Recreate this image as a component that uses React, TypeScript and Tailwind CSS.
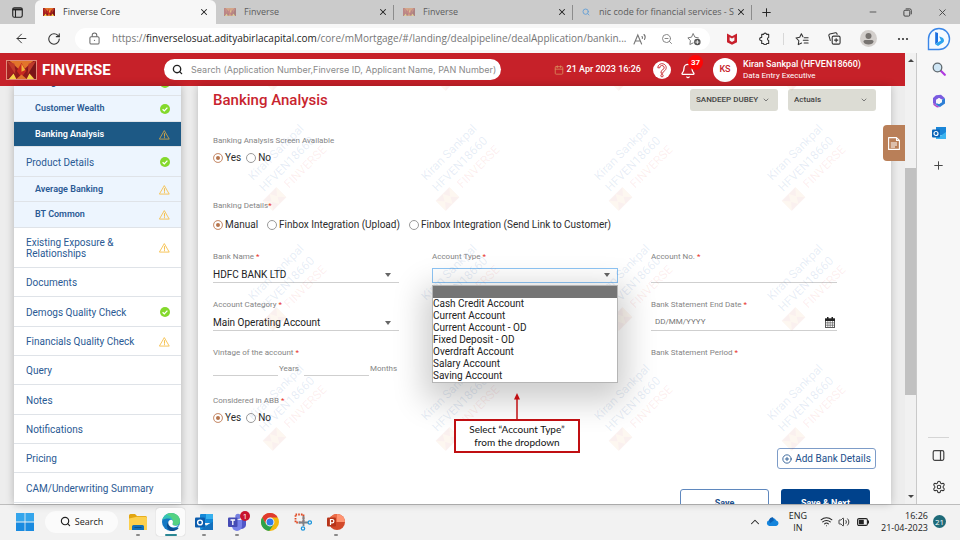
import React from "react";
import {
  ArrowLeft,
  Bell,
  Calendar,
  ChevronDown,
  ChevronUp,
  CirclePlus,
  Minus,
  Plus,
  RotateCw,
  Search,
  Settings,
  Volume2,
  Wifi,
  X,
  ZoomOut,
} from "lucide-react";

const UI = "font-['Open_Sans','Noto_Sans',sans-serif]";

function BrandMark({ className }: { className: string }) {
  return (
    <svg viewBox="0 0 31 20" preserveAspectRatio="none" className={className} aria-hidden="true">
      <rect width="31" height="20" fill="#8f1a1c" />
      <path d="M3 0h25L15.500 12z" fill="#e2742a" />
      <path d="M0 0l10 10L0 20z" fill="#a82020" />
      <path d="M31 0L21 10l10 10z" fill="#7a1518" />
      <path d="M0 0l8 3 1 12zM31 0l-8 3-1 12z" fill="#c03a2a" />
      <path d="M15.500 2l5 9-5 7-5-7z" fill="#c8281f" />
      <path d="M15.500 3l4 7-4 2z" fill="#f0b63a" />
      <path d="M2 20l5-6 3 6zM29 20l-5-6-3 6z" fill="#f6d24a" />
      <path d="M10 20l5.500-5 5.500 5z" fill="#e0762c" />
    </svg>
  );
}

function WarnIcon({ color }: { color: string }) {
  return (
    <svg viewBox="0 0 12 11" className="h-[10px] w-[11px]" fill="none" stroke={color} strokeLinecap="round" strokeLinejoin="round" aria-label="Pending">
      <path d="M6 1L11.200 10H.8z" strokeWidth="1" />
      <path d="M6 3.800v3M6 8.300v.3" strokeWidth="1.200" />
    </svg>
  );
}

function DoneIcon() {
  return (
    <svg viewBox="0 0 10 10" className="size-[10px]" aria-label="Complete">
      <circle cx="5" cy="5" r="5" fill="#84d92c" />
      <path d="M2.600 5.200l1.700 1.700 3.100-3.300" fill="none" stroke="#fff" strokeWidth="1.300" />
    </svg>
  );
}

/* ---------- browser chrome ---------- */

function TabButton({ title, icon, active, divider }: { title: string; icon: React.ReactNode; active?: boolean; divider?: boolean }) {
  return (
    <div
      className={
        active
          ? "flex h-full w-[181px] items-center rounded-t-md bg-[#f7f7f7] pr-[7px] pl-2 text-[#3c3c3c]"
          : "flex h-full w-[179px] items-center pr-[5px] pl-2 text-[#5c5c5c]"
      }
    >
      {icon}
      <span className="ml-2 min-w-0 flex-1 whitespace-nowrap">{title}</span>
      <button aria-label="Close tab" className="ml-1 shrink-0 text-[#222]">
        <X className="size-[10px]" strokeWidth={2.500} />
      </button>
      {divider && <span className="-mr-1 ml-[5px] h-[15px] w-px shrink-0 bg-[#8c8c8c]" />}
    </div>
  );
}

function TabStrip() {
  return (
    <div className="flex h-6 shrink-0 items-center bg-[#cbcbcb] text-[9px]">
      <button aria-label="Tab actions" className="flex w-[35px] justify-center">
        <svg viewBox="0 0 12 12" className="size-[11px]" fill="none" stroke="#222">
          <rect x=".8" y=".8" width="10.400" height="10.400" rx="1.800" strokeWidth="1.200" />
          <path d="M.8 2.600h10.400" strokeWidth="2.200" />
          <path d="M3.800 3v8" strokeWidth="1.200" />
        </svg>
      </button>
      <TabButton active title="Finverse Core" icon={<BrandMark className="h-2 w-3" />} />
      <TabButton divider title="Finverse" icon={<BrandMark className="h-2 w-3 opacity-40" />} />
      <TabButton divider title="Finverse" icon={<BrandMark className="h-2 w-3 opacity-40" />} />
      <TabButton divider title="nic code for financial services - S" icon={<Search className="mr-px size-2 shrink-0 text-[#6ba3d6]" strokeWidth={3} />} />
      <button aria-label="New tab" className="ml-[7px] text-[#222]">
        <Plus className="size-[13px]" strokeWidth={1.800} />
      </button>
      <div className="ml-auto flex items-center gap-[25px] pr-3 text-[#444]">
        <button aria-label="Minimise"><Minus className="size-[10px]" strokeWidth={2} /></button>
        <button aria-label="Restore">
          <svg viewBox="0 0 10 10" className="size-[9px]" fill="none" stroke="currentColor" strokeWidth="1.100">
            <rect x="1" y="2.500" width="6.500" height="6.500" rx="1.200" />
            <path d="M3 1h4.500A1.700 1.700 0 0 1 9.200 2.700V7" />
          </svg>
        </button>
        <button aria-label="Close"><X className="size-[11px]" strokeWidth={2} /></button>
      </div>
    </div>
  );
}

function StarIcon({ kind }: { kind: "add" | "list" }) {
  return (
    <svg viewBox="0 0 16 16" className="size-[14px]" fill="none" stroke={kind === "add" ? "#777" : "#333"} strokeLinejoin="round" strokeLinecap="round">
      {kind === "add" ? (
        <>
          <path d="M7 12.500L3.300 14.300l.6-4.400L1 6.700l4.200-.8L7 1.700l2 4.200 4 .8" strokeWidth="1.100" />
          <circle cx="11.800" cy="11.500" r="3.700" fill="#555" stroke="none" />
          <path d="M11.800 9.700v3.600M10 11.500h3.600" stroke="#fff" strokeWidth="1" />
        </>
      ) : (
        <path d="M7.500 12.500L3.700 14.400l.7-4.400L1.200 6.800l4.200-.7L7.300 2l1.700 3.500M10.500 6.500H15M9.500 9.500H15M10.500 12.500H15" strokeWidth="1.200" />
      )}
    </svg>
  );
}

function Toolbar() {
  return (
    <div className="flex h-[29px] shrink-0 items-center bg-[#f7f7f7] text-[#333]">
      <button aria-label="Back" className="ml-[14px]"><ArrowLeft className="size-[15px]" strokeWidth={1.600} /></button>
      <button aria-label="Reload" className="ml-[18px]"><RotateCw className="size-[14px]" strokeWidth={1.900} /></button>
      <div className="ml-[14px] flex h-[22px] min-w-0 flex-1 items-center rounded-full bg-white pr-[9px] pl-[14px]">
        <svg viewBox="0 0 12 14" className="h-[13px] w-[11px] shrink-0" fill="none" stroke="#666" strokeWidth="1.100" aria-label="Secure">
          <rect x="1" y="5" width="10" height="8" rx="1.500" />
          <path d="M3.500 5V3.500a2.500 2.500 0 0 1 5 0V5" />
          <circle cx="6" cy="9" r=".7" fill="#666" stroke="none" />
        </svg>
        <p className="ml-[12px] min-w-0 flex-1 truncate text-[10px] text-[#767676]">
          https://<span className="text-[#1d1d1d]">finverselosuat.adityabirlacapital.com</span>/core/mMortgage/#/landing/dealpipeline/dealApplication/bankin...
        </p>
        <button aria-label="Read aloud" className="ml-[2px]">
          <svg viewBox="0 0 14 12" className="h-3 w-[14px]" fill="none" stroke="#777" strokeWidth="1.100" strokeLinecap="round">
            <path d="M1 11L4.800 2 8.600 11M2.400 8h4.800M9 3.500c.6.600.6 1.400.3 2M11 1.500c1.400 1.400 1.400 3.400.5 5" />
          </svg>
        </button>
        <button aria-label="Zoom out" className="ml-[14px]"><ZoomOut className="size-[12px] text-[#888]" strokeWidth={2} /></button>
        <button aria-label="Add to favourites" className="ml-[14px]"><StarIcon kind="add" /></button>
      </div>
      <div className="ml-4 flex items-center">
        <svg viewBox="0 0 12 12" className="size-[12px]" aria-label="McAfee">
          <path d="M1 .5l5 2.800L11 .5v8.700l-5 2.500-5-2.500z" fill="#c8202c" />
          <path d="M3.600 4.200L6 5.600l2.400-1.400v3.400L6 8.900 3.600 7.600z" fill="#f7f7f7" />
        </svg>
        <button aria-label="Extensions" className="ml-[20px]">
          <svg viewBox="0 0 14 14" className="size-[13px]" fill="none" stroke="#333" strokeWidth="1.200" strokeLinejoin="round">
            <path d="M4 2.500h2a1.700 1.700 0 0 1 3.300 0h2.200v3.300a1.700 1.700 0 0 0 0 3.300v3.300H9.300a1.700 1.700 0 0 1-3.300 0H4V9.300a1.800 1.800 0 1 1 0-3.500z" />
          </svg>
        </button>
        <span className="ml-3 h-3 w-px bg-[#d8d8d8]" />
        <button aria-label="Favourites" className="ml-[11px]"><StarIcon kind="list" /></button>
        <button aria-label="Collections" className="ml-[19px]">
          <svg viewBox="0 0 14 14" className="size-[13px]" fill="none" stroke="#333" strokeWidth="1.200">
            <rect x="4.500" y="4.500" width="8.500" height="8.500" rx="1.500" />
            <path d="M8.800 6.600v4.400M6.600 8.800H11M2.600 9.500L1 4a1.500 1.500 0 0 1 1-1.800L8 .8a1.500 1.500 0 0 1 1.600 1L10 3" />
          </svg>
        </button>
        <button aria-label="Profile" className="ml-[19px]">
          <svg viewBox="0 0 17 17" className="size-[17px]">
            <circle cx="8.500" cy="8.500" r="8.500" fill="#d3cfcc" />
            <circle cx="8.500" cy="6" r="3" fill="#777370" />
            <path d="M3.500 11.500a1.500 1.500 0 0 1 1.500-1.500h7a1.500 1.500 0 0 1 1.500 1.500c0 4-10 4-10 0z" fill="#777370" />
          </svg>
        </button>
        <button aria-label="Settings and more" className="ml-[20px]">
          <svg viewBox="0 0 12 4" className="h-1 w-[12px]" fill="#333"><circle cx="2" cy="2" r="1.100" /><circle cx="6" cy="2" r="1.100" /><circle cx="10" cy="2" r="1.100" /></svg>
        </button>
      </div>
      <button aria-label="Bing" className="mr-[9px] ml-[18px]">
        <svg viewBox="0 0 24 24" className="size-[24px]">
          <path d="M1.500 22.500V12A10.500 10.500 0 1 1 12 22.500z" fill="#f4faff" stroke="#3a86e8" strokeWidth="1.400" />
          <path d="M8.200 5l2.800 1v9.200l-2.800 2z" fill="#1b6fe0" />
          <path d="M8.200 17.200l2.800-2 3-1.800-1.800-3.800c2.500.7 4.800 1.500 4.800 4 0 1-.5 1.700-1.200 2.200L11 19z" fill="#2ba3ee" />
        </svg>
      </button>
    </div>
  );
}

function EdgeSidebar() {
  return (
    <aside className="flex w-[43px] shrink-0 flex-col items-center bg-[#f7f7f7] pt-[9px] pb-[10px]">
      <div className="flex flex-col items-center gap-[18px]">
        <svg viewBox="0 0 14 14" className="size-[14px]">
          <path d="M8.800 8.800l4 4" stroke="#b03ae0" strokeWidth="2.200" strokeLinecap="round" />
          <circle cx="5.500" cy="5.500" r="4.300" fill="#cfe6f5" stroke="#60696f" strokeWidth="1.300" />
        </svg>
        <svg viewBox="0 0 14 14" className="size-[14px]">
          <path d="M4 1.200L9 .8l4 3.400-3 1.600L7 4 4 6v5L1 9V4z" fill="#7a5be0" />
          <path d="M13 4.200V9.500L8 13l-4-2 .5-2L7 10l3-2V5.800z" fill="#2d7fd6" />
          <path d="M1 9l3 2 4 2-3 .5L1.500 11z" fill="#b04ad0" />
          <path d="M7 4l3 1.800V8l-3 2-3-1.500V6z" fill="#f7f7f7" />
        </svg>
        <svg viewBox="0 0 14 14" className="size-[14px]">
          <rect x="4" y="1" width="10" height="8" fill="#1a86d8" />
          <path d="M4 6l5 3.500L14 6v7H4z" fill="#3cb4f0" />
          <rect x="0" y="3.500" width="8" height="8" rx="1" fill="#0a64b8" />
          <circle cx="4" cy="7.500" r="2" fill="none" stroke="#fff" strokeWidth="1.200" />
        </svg>
        <button aria-label="Add" className="mt-px"><Plus className="size-[13px] text-[#444]" strokeWidth={1.800} /></button>
      </div>
      <div className="mt-auto flex w-[21px] flex-col items-center gap-[18px] border-t border-[#d5d5d5] pt-[11px]">
        <svg viewBox="0 0 13 13" className="size-[13px]" fill="none" stroke="#444" strokeWidth="1.200">
          <rect x="1.200" y="1.700" width="10.600" height="9.600" rx="1.500" />
          <path d="M8.500 1.700v9.600" />
        </svg>
        <Settings className="size-[14px] text-[#333]" strokeWidth={1.800} />
      </div>
    </aside>
  );
}

/* ---------- application ---------- */

function AppHeader() {
  return (
    <header className="flex h-[33px] shrink-0 items-center bg-[#c62129] text-white">
      <BrandMark className="ml-[6px] h-5 w-[31px] border border-[#e08a7a]" />
      <strong className="ml-[5px] w-[70px] text-[15px] leading-5 font-bold">FINVERSE</strong>
      <label className="ml-[52px] flex h-[21px] w-[337px] items-center rounded-full bg-white pl-2">
        <Search className="size-[11px] shrink-0 text-[#222]" strokeWidth={3} />
        <input
          aria-label="Search"
          className="ml-2 w-full min-w-0 bg-transparent font-[Inter,sans-serif] text-[9px] text-[#333] outline-none placeholder:text-[#8a8a8a]"
          placeholder="Search (Application Number,Finverse ID, Applicant Name, PAN Number)"
        />
      </label>
      <div className="ml-auto flex items-center pr-11">
        <Calendar className="size-[10px] text-[#d98a5c]" strokeWidth={2} />
        <time className="ml-[3px] text-[9px] font-medium whitespace-nowrap">21 Apr 2023 16:26</time>
        <button aria-label="Help" className="ml-3">
          <svg viewBox="0 0 18 18" className="size-[18px]">
            <circle cx="9" cy="9" r="9" fill="#fff" />
            <path d="M4.800 6.800a4.200 4 0 1 1 6.500 3.200c-1.100.8-1.300 1.100-1.300 2.200H8c0-2 .5-2.700 1.700-3.600A2.200 2.100 0 1 0 6.800 6.800z" fill="none" stroke="#c62129" strokeWidth=".9" />
            <circle cx="9" cy="14.700" r="1.200" fill="none" stroke="#c62129" strokeWidth=".9" />
          </svg>
        </button>
        <button aria-label="Notifications" className="relative ml-[9px]">
          <Bell className="mt-[3px] size-[16px]" strokeWidth={2} />
          <span className="absolute -top-[5px] left-[8px] flex size-[15px] items-center justify-center rounded-full bg-[#fe0505] text-[8px] font-bold">37</span>
        </button>
        <span className="ml-[17px] flex size-6 items-center justify-center rounded-full bg-white text-[9px] font-medium text-[#c62129]">KS</span>
        <div className="ml-[6px] whitespace-nowrap">
          <p className="text-[9px] leading-[12px] font-medium">Kiran Sankpal (HFVEN18660)</p>
          <p className="text-[8px] leading-[11px]">Data Entry Executive</p>
        </div>
      </div>
    </header>
  );
}

type NavItem = { label: string; level: "main" | "sub"; height: string; status?: "done" | "warn"; active?: boolean; tint?: boolean };

const NAV: NavItem[] = [
  { label: "Obligation", level: "sub", height: "h-[26px]", status: "done", tint: true },
  { label: "Customer Wealth", level: "sub", height: "h-[26px]", status: "done", tint: true },
  { label: "Banking Analysis", level: "sub", height: "h-[25px]", status: "warn", active: true },
  { label: "Product Details", level: "main", height: "h-[30px]", status: "done", tint: true },
  { label: "Average Banking", level: "sub", height: "h-[25px]", status: "warn", tint: true },
  { label: "BT Common", level: "sub", height: "h-[26px]", status: "warn", tint: true },
  { label: "Existing Exposure & Relationships", level: "main", height: "h-10", status: "warn" },
  { label: "Documents", level: "main", height: "h-[29px]" },
  { label: "Demogs Quality Check", level: "main", height: "h-[30px]", status: "done" },
  { label: "Financials Quality Check", level: "main", height: "h-[29px]", status: "warn" },
  { label: "Query", level: "main", height: "h-[29px]" },
  { label: "Notes", level: "main", height: "h-[30px]" },
  { label: "Notifications", level: "main", height: "h-[29px]" },
  { label: "Pricing", level: "main", height: "h-[29px]" },
  { label: "CAM/Underwriting Summary", level: "main", height: "h-[30px]" },
];

function SideNav() {
  return (
    <nav className="ml-[14px] w-[167px] shrink-0 overflow-hidden bg-white shadow-[0_0_8px_rgba(0,0,0,0.25)]">
      <ul className="-mt-4">
        {NAV.map((item) => {
          const bg = item.active ? "bg-[#1d5985]" : item.tint ? "bg-[#edf5fe]" : "bg-white";
          return (
            <li key={item.label} className={`${item.height} ${bg} border-b border-[#dfe3e8]`}>
              <a
                href="#"
                className={`flex h-full items-center pt-px pr-[11px] ${
                  item.level === "sub" ? "pl-[21px] text-[9px] font-semibold" : "pl-3 text-[10px] leading-[11px]"
                } ${item.active ? "text-white" : "text-[#2a5a94]"}`}
              >
                <span className={item.label.startsWith("Existing") ? "w-[100px]" : "whitespace-nowrap"}>{item.label}</span>
                <span className="ml-auto">
                  {item.status === "done" && <DoneIcon />}
                  {item.status === "warn" && <WarnIcon color={item.active ? "#c9a24a" : "#f6c14e"} />}
                </span>
              </a>
            </li>
          );
        })}
      </ul>
    </nav>
  );
}

function Watermark() {
  const cols = [253, 426, 599, 772];
  const rows = [-25, 95, 215, 335];
  return (
    <svg className="pointer-events-none absolute inset-0 size-full text-[12px]" aria-hidden="true">
      {rows.map((y) =>
        cols.map((x) => (
          <g key={`${x}-${y}`} transform={`translate(${x - 198} ${y}) rotate(-45)`}>
            <text fill="#3a6cb5" fillOpacity=".12">Kiran Sankpal</text>
            <text y="16" fill="#3a6cb5" fillOpacity=".12">HFVEN18660</text>
            <g opacity=".07">
              <rect x="-7" y="21" width="19" height="14" fill="#c8382a" />
              <path d="M-7 21l6 7-6 7M12 21l-6 7 6 7M2.500 21l4 7-4 7-4-7z" fill="#f0a040" />
            </g>
            <text x="20" y="31" fill="#e0403a" fillOpacity=".09">FINVERSE</text>
          </g>
        ))
      )}
    </svg>
  );
}

function Req() {
  return <span className="text-[#e8302a]"> *</span>;
}

const LABEL = "block h-3 text-[8px] leading-3 whitespace-nowrap text-[#858585]";
const LINE = "border-b border-[#cfcfcf]";

function Radio({ name, label, checked }: { name: string; label: string; checked?: boolean }) {
  return (
    <label className="flex items-center gap-[2px] text-[10px] leading-4 whitespace-nowrap text-[#2c2c2c]">
      <input
        type="radio"
        name={name}
        defaultChecked={checked}
        className="size-[10px] shrink-0 appearance-none rounded-full border border-[#9a9a9a] bg-white checked:border-[#cf9a7c] checked:bg-[#b5744c] checked:shadow-[inset_0_0_0_2px_white]"
      />
      {label}
    </label>
  );
}

function Caret() {
  return <span className="pointer-events-none absolute top-[5px] right-[8px] border-x-[3px] border-t-4 border-x-transparent border-t-[#666]" />;
}

function SelectField({ id, label, value }: { id: string; label: string; value: string }) {
  return (
    <div>
      <label htmlFor={id} className={LABEL}>{label}<Req /></label>
      <div className="relative mt-[5px]">
        <select id={id} className={`block h-[15px] w-full appearance-none bg-transparent pr-5 pb-px text-[10px] leading-[13px] text-[#222] outline-none ${LINE}`}>
          <option>{value}</option>
        </select>
        <Caret />
      </div>
    </div>
  );
}

const ACCOUNT_TYPES = [
  "Cash Credit Account",
  "Current Account",
  "Current Account - OD",
  "Fixed Deposit - OD",
  "Overdraft Account",
  "Salary Account",
  "Saving Account",
];

function AccountType() {
  return (
    <div className="relative">
      <label htmlFor="acc-type" className={LABEL}>Account Type<Req /></label>
      <div className="relative mt-[5px]">
        <select id="acc-type" className="block h-[15px] w-full appearance-none border border-[#8ec5f5] bg-transparent text-[10px] outline-none">
          <option></option>
        </select>
        <Caret />
      </div>
      <ul role="listbox" aria-label="Account Type" className="absolute inset-x-0 top-[34px] z-10 border border-[#b5b5b5] bg-white shadow-[0_10px_30px_8px_rgba(0,0,0,0.2)]">
        <li role="option" aria-selected="true" className="h-3 bg-[#757575]" />
        {ACCOUNT_TYPES.map((t) => (
          <li key={t} role="option" aria-selected="false" className="h-3 text-[10px] leading-3 whitespace-nowrap text-[#222]">{t}</li>
        ))}
      </ul>
      <div className="absolute top-[142px] left-[22px] z-20 flex w-[126px] flex-col items-center">
        <svg viewBox="0 0 8 26" className="h-[26px] w-2" aria-hidden="true">
          <path d="M4 5v21" stroke="#c00f12" strokeWidth="1.500" />
          <path d="M4 0l3 6.500H1z" fill="#c00f12" />
        </svg>
        <p className="h-[34px] w-full border-2 border-[#c00f12] bg-white pt-[2px] text-center font-[Lato,sans-serif] text-[10px] leading-[13px] text-[#111]">
          Select “Account Type”
          <br />
          from the dropdown
        </p>
      </div>
    </div>
  );
}

function PillSelect({ id, value, label }: { id: string; value: string; label: string }) {
  return (
    <div className="relative w-[88px]">
      <select id={id} aria-label={label} className="block h-[22px] w-full appearance-none rounded-[3px] bg-[#dcdcd4] pl-[6px] text-[8px] font-medium text-[#444]">
        <option>{value}</option>
      </select>
      <ChevronDown className="pointer-events-none absolute top-[7px] right-[8px] size-2 text-[#666]" strokeWidth={2.500} />
    </div>
  );
}

function MainPanel() {
  return (
    <main className="relative ml-[17px] min-w-0 flex-1 overflow-hidden bg-white shadow-[0_0_8px_rgba(0,0,0,0.22)]">
      <div className="flex items-center justify-between pt-[3px] pr-[15px] pl-[15px]">
        <h1 className="text-[15px] leading-[22px] font-medium text-[#c8242e]">Banking Analysis</h1>
        <div className="flex gap-[10px]">
          <PillSelect id="applicant" label="Applicant" value="SANDEEP DUBEY" />
          <PillSelect id="view" label="View" value="Actuals" />
        </div>
      </div>
      <div className="mt-6 pr-[54px] pl-[15px]">
        <p className={LABEL}>Banking Analysis Screen Available</p>
        <div className="mt-[3px] flex gap-[5px]">
          <Radio name="screen" label="Yes" checked />
          <Radio name="screen" label="No" />
        </div>
        <p className={`${LABEL} mt-[34px]`}>Banking Details<span className="text-[#e8302a]">*</span></p>
        <div className="mt-[5px] flex gap-[9px]">
          <Radio name="mode" label="Manual" checked />
          <Radio name="mode" label="Finbox Integration (Upload)" />
          <Radio name="mode" label="Finbox Integration (Send Link to Customer)" />
        </div>
        <div className="mt-[18px] grid auto-rows-[32px] grid-cols-3 gap-x-[33px] gap-y-4">
          <SelectField id="bank" label="Bank Name" value="HDFC BANK LTD" />
          <AccountType />
          <div>
            <label htmlFor="acc-no" className={LABEL}>Account No.<Req /></label>
            <input id="acc-no" className={`mt-[5px] block h-[15px] w-full bg-transparent text-[10px] outline-none ${LINE}`} />
          </div>
          <SelectField id="category" label="Account Category" value="Main Operating Account" />
          <div className="col-start-3">
            <label htmlFor="end-date" className={LABEL}>Bank Statement End Date<Req /></label>
            <div className={`mt-[5px] flex h-[15px] items-center pr-[2px] pb-[2px] pl-1 ${LINE}`}>
              <input id="end-date" placeholder="DD/MM/YYYY" className="w-full min-w-0 bg-transparent text-[8px] outline-none placeholder:text-[#777]" />
              <svg viewBox="0 0 10 11" className="h-[11px] w-[10px] shrink-0" aria-label="Pick a date">
                <path d="M0 1.500h10V11H0z" fill="#5a5a5a" />
                <path d="M0 1.500h10V4H0zM2 0h1.500v2.500H2zM6.500 0H8v2.500H6.500z" fill="#222" />
                <path d="M1 4h1.600v1.600H1zM3.200 4h1.600v1.600H3.200zM5.400 4H7v1.600H5.400zM7.600 4H9v1.600H7.600zM1 6.200h1.600v1.600H1zM3.200 6.200h1.600v1.600H3.200zM5.400 6.200H7v1.600H5.400zM7.600 6.200H9v1.600H7.600zM1 8.400h1.600V10H1zM3.200 8.400h1.600V10H3.200zM5.400 8.400H7V10H5.400zM7.600 8.400H9V10H7.600z" fill="#fff" />
              </svg>
            </div>
          </div>
          <div className="col-start-1">
            <span className={LABEL}>Vintage of the account<Req /></span>
            <div className="mt-[5px] flex text-[8px] leading-[8px] text-[#858585]">
              <input aria-label="Years" className={`h-3 w-[65px] bg-transparent ${LINE}`} />
              <span className="w-[26px] pt-px pl-px">Years</span>
              <input aria-label="Months" className={`h-3 w-[65px] bg-transparent ${LINE}`} />
              <span className="pt-px pl-px">Months</span>
            </div>
          </div>
          <div className="col-start-3">
            <span className={LABEL}>Bank Statement Period<Req /></span>
          </div>
          <div className="col-start-1">
            <span className={LABEL}>Considered in ABB<Req /></span>
            <div className="mt-[3px] flex gap-[5px]">
              <Radio name="abb" label="Yes" checked />
              <Radio name="abb" label="No" />
            </div>
          </div>
        </div>
      </div>
      <div className="mt-[21px] flex justify-end pr-[15px]">
        <button className="flex h-[21px] w-[99px] items-center justify-center gap-[3px] rounded-[3px] border border-[#7d9cc8] bg-white text-[10px] whitespace-nowrap text-[#1c4f8c]">
          <CirclePlus className="size-[10px] shrink-0" strokeWidth={2} />
          Add Bank Details
        </button>
      </div>
      <div className="mt-5 flex justify-end gap-3 pr-[21px] text-[9px] font-bold">
        <button className="h-[30px] w-[89px] rounded-[3px] border border-[#5f88be] bg-white text-[#1c4f8c]">Save</button>
        <button className="h-[30px] w-[89px] rounded-[3px] bg-[#00428c] text-white">Save &amp; Next</button>
      </div>
      <Watermark />
    </main>
  );
}

function ScrollBar() {
  return (
    <div className="flex w-3 shrink-0 flex-col items-center border-r border-[#c9c9c9] bg-[#f1f1f1] py-[6px]">
      <span className="border-x-[3px] border-b-[3px] border-x-transparent border-b-[#444]" />
      <span className="mt-[106px] h-[227px] w-full bg-[#c1c1c1]" />
      <span className="mt-auto border-x-[3px] border-t-[3px] border-x-transparent border-t-[#444]" />
    </div>
  );
}

/* ---------- taskbar ---------- */

function TaskSlot({ name, children, running, focused }: { name: string; children: React.ReactNode; running?: boolean; focused?: boolean }) {
  return (
    <button aria-label={name} className={`relative flex h-7 w-[29px] items-center justify-center rounded-[3px] ${focused ? "bg-[#fbfbfb] shadow-[0_0_1px_rgba(0,0,0,0.3)]" : ""}`}>
      {children}
      {running && <span className={`absolute bottom-0 h-[2px] rounded-full ${focused ? "w-3 bg-[#2b8794]" : "w-1 bg-[#8a8a8a]"}`} />}
    </button>
  );
}

function Taskbar() {
  return (
    <footer className="flex h-9 shrink-0 items-center border-t border-[#bdbdbd] bg-[#f2f2f2] pb-[2px] text-[9px] text-[#222]">
      <button aria-label="Start" className="ml-4">
        <svg viewBox="0 0 18 18" className="size-[18px]" fill="#1a8be0">
          <path d="M0 0h8.600v8.600H0zM9.400 0H18v8.600H9.400z" fill="#35a6ec" />
          <path d="M0 9.400h8.600V18H0zM9.400 9.400H18V18H9.400z" />
        </svg>
      </button>
      <button className="ml-[11px] flex h-[22px] w-[73px] items-center justify-center gap-1 rounded-full bg-[#fbfbfb]">
        <Search className="size-[11px]" strokeWidth={2.500} />
        Search
      </button>
      <div className="ml-[5px] flex gap-1">
        <TaskSlot name="File Explorer" running>
          <svg viewBox="0 0 18 18" className="size-[18px]">
            <path d="M0 2.500A1.500 1.500 0 0 1 1.500 1H6l2 2h8.500A1.500 1.500 0 0 1 18 4.500V17H0z" fill="#e2a510" />
            <path d="M0 5.500L8 3.800h8.500A1.500 1.500 0 0 1 18 5.300V17H0z" fill="#fcd04d" />
            <path d="M3 17v-3.500A1.500 1.500 0 0 1 4.500 12h9a1.500 1.500 0 0 1 1.500 1.500V17z" fill="#1170b8" />
            <path d="M5.500 14h7v1h-7z" fill="#0b4f88" />
          </svg>
        </TaskSlot>
        <TaskSlot name="Microsoft Edge" running focused>
          <svg viewBox="0 0 18 18" className="size-[18px]">
            <circle cx="9" cy="9" r="9" fill="#1478c4" />
            <path d="M.2 7C1.500 2.500 5 0 9.300 0 14.500 0 18 3.800 18 8c0 3-2.300 4.500-4.800 4.500-2.200 0-2.900-.9-2.900-1.500 0-.5.700-.8.700-2C11 7 9 5.400 6.300 5.400 3.700 5.400 1.300 6 .2 7z" fill="#36c3b4" />
            <path d="M9.300 0C14.500 0 18 3.800 18 8c0 3-2.300 4.500-4.800 4.500-2.200 0-2.900-.9-2.900-1.500 2-5-2-9-6-9.200C5.800.5 7.500 0 9.300 0z" fill="#62d86c" opacity=".7" />
            <path d="M6.500 9.500c0 3.700 3 6.300 8 5.800 1.200-.1 1.800-.6 2-.4.400.4-2.700 3.100-7 3.100C6 17.500 4.500 14 5 11.500c.2-1 .8-1.700 1.500-2z" fill="#0c4f92" />
            <path d="M10.900 8.600C10.700 7.200 9.300 6.500 8 7 6.300 7.700 5.900 9.600 6.600 11.500c1.200 2.900 4.700 3.600 7.500 2.500 1.500-.5 2.400-1.200 2.800-1.900-1.800 1.100-5 .8-6.200-.3-.7-.6.400-1.500.2-3.200z" fill="#fff" />
          </svg>
        </TaskSlot>
        <TaskSlot name="Outlook" running>
          <svg viewBox="0 0 18 18" className="size-[18px]">
            <rect x="5" y="1" width="13" height="9" rx="1" fill="#1488d8" />
            <path d="M11 1h7v5h-7z" fill="#35b0ee" />
            <path d="M5 8.500l6.500 4 6.500-4V16a1 1 0 0 1-1 1H6a1 1 0 0 1-1-1z" fill="#1a9be4" />
            <path d="M5 17l13-8.500V17z" fill="#1470bd" />
            <rect y="4.500" width="10" height="10" rx="1" fill="#0b5cad" />
            <circle cx="5" cy="9.500" r="2.400" fill="none" stroke="#fff" strokeWidth="1.400" />
          </svg>
        </TaskSlot>
        <TaskSlot name="Teams" running>
          <svg viewBox="0 0 18 18" className="size-[18px]">
            <circle cx="10" cy="3.500" r="2.700" fill="#7680e0" />
            <path d="M11 7h7v5a4 4 0 0 1-7 2.500z" fill="#5057c8" />
            <path d="M4 7h10v6a5 5 0 0 1-10 0z" fill="#7680e8" />
            <rect y="4.500" width="9.500" height="9.500" rx="1" fill="#454bb5" />
            <path d="M2.500 7h4.600M4.800 7v5" stroke="#fff" strokeWidth="1.300" />
          </svg>
          <span className="absolute top-[3px] right-px flex size-[10px] items-center justify-center rounded-full bg-[#c8152e] text-[8px] leading-none text-white">1</span>
        </TaskSlot>
        <TaskSlot name="Chrome">
          <svg viewBox="0 0 18 18" className="size-[18px]">
            <circle cx="9" cy="9" r="9" fill="#f2b90f" />
            <path d="M1.200 4.500a9 9 0 0 1 15.600 0H9L5.100 11.200z" fill="#e03a2f" />
            <path d="M1.200 4.500a9 9 0 0 0 7 13.500l4.700-6.700H5.100z" fill="#2ba24c" />
            <circle cx="9" cy="9" r="4.400" fill="#fff" />
            <circle cx="9" cy="9" r="3.500" fill="#2f7be8" />
          </svg>
        </TaskSlot>
        <TaskSlot name="Snipping Tool">
          <svg viewBox="0 0 18 18" className="size-[18px]" fill="none">
            <rect x="1.500" y="1.500" width="8" height="8" stroke="#e04a24" strokeWidth="1.800" strokeDasharray="1.600 1.100" />
            <path d="M9.500 3v10M4.500 9.500H14" stroke="#7c8288" strokeWidth="1.800" />
            <circle cx="9" cy="15.500" r="1.700" stroke="#1b95dc" strokeWidth="1.200" />
            <circle cx="15.800" cy="9.500" r="1.700" stroke="#1b95dc" strokeWidth="1.200" />
          </svg>
        </TaskSlot>
        <TaskSlot name="PowerPoint" running>
          <svg viewBox="0 0 18 18" className="size-[18px]">
            <circle cx="10" cy="9" r="8" fill="#d2492a" />
            <path d="M10 1a8 8 0 0 1 8 8h-8z" fill="#ff9471" />
            <path d="M10 1v8H2a8 8 0 0 1 8-8z" fill="#ed6c47" />
            <rect y="4.500" width="9" height="9" rx="1" fill="#b7351a" />
            <path d="M3.500 12V6.500h1.700a1.600 1.600 0 0 1 0 3.300H3.500" stroke="#fff" strokeWidth="1.200" fill="none" />
          </svg>
        </TaskSlot>
      </div>
      <div className="ml-auto flex items-center pr-[14px]">
        <button aria-label="Hidden icons"><ChevronUp className="size-[14px]" strokeWidth={1.800} /></button>
        <svg viewBox="0 0 13 9" className="ml-1 h-[9px] w-[13px]">
          <path d="M3.200 9A3 3 0 0 1 3 3.200 4 4 0 0 1 10.300 3.500 2.800 2.800 0 0 1 10.200 9z" fill="#1484dc" />
          <path d="M3 3.200a4 4 0 0 1 4-2.900l1 3-4 3z" fill="#0a5fb4" />
        </svg>
        <p className="ml-[10px] text-center leading-3">ENG<br />IN</p>
        <Wifi className="ml-[13px] size-[13px]" strokeWidth={1.900} />
        <Volume2 className="ml-[5px] size-[12px]" strokeWidth={1.700} />
        <svg viewBox="0 0 12 8" className="ml-[7px] h-2 w-3">
          <rect x=".6" y=".6" width="9.800" height="6.800" rx="1.400" fill="none" stroke="#222" strokeWidth="1.100" />
          <rect x="1.800" y="1.800" width="5" height="4.400" fill="#222" />
          <path d="M11.500 2.500v3" stroke="#222" strokeWidth="1.200" />
        </svg>
        <p className="ml-3 text-right leading-3 whitespace-nowrap">16:26<br />21-04-2023</p>
        <span className="ml-[5px] flex size-[13px] items-center justify-center rounded-full bg-[#1e6a78] text-[8px] text-white">21</span>
      </div>
    </footer>
  );
}

export default function App() {
  return (
    <div className={`flex h-screen flex-col overflow-hidden bg-white ${UI}`}>
      <TabStrip />
      <Toolbar />
      <div className="flex min-h-0 flex-1">
        <div className="flex min-w-0 flex-1 flex-col font-[Roboto,sans-serif]">
          <AppHeader />
          <div className="relative flex min-h-0 flex-1 bg-[#ededed] pr-[14px]">
            <SideNav />
            <MainPanel />
            <button aria-label="Notes panel" className="absolute top-[39px] right-0 flex h-9 w-[22px] items-center justify-center rounded-l-[4px] bg-[#b97f58] text-white">
              <svg viewBox="0 0 12 13" className="h-[13px] w-3" fill="none" stroke="currentColor" strokeWidth="1.100" strokeLinejoin="round">
                <path d="M.6.600H8.500L11.400 3.500V12.400H.6zM8.500.600V3.500H11.400M2.800 6H9M2.800 8H9M2.800 10H7" />
              </svg>
            </button>
          </div>
        </div>
        <ScrollBar />
        <EdgeSidebar />
      </div>
      <Taskbar />
    </div>
  );
}
